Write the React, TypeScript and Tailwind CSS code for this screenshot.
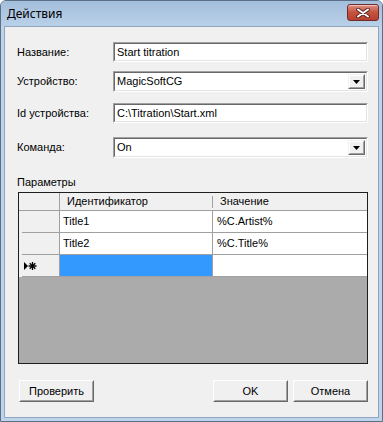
import React from "react";

const Sunken: React.FC<{ className?: string; children?: React.ReactNode }> = ({ className = "", children }) => (
  <div className={"border border-t-[#a0a0a0] border-l-[#a0a0a0] border-b-white border-r-white " + className}>
    <div className="h-full border border-t-[#696969] border-l-[#696969] border-b-[#e3e3e3] border-r-[#e3e3e3] bg-white flex items-center">
      {children}
    </div>
  </div>
);

const Arrow = () => (
  <svg width="7" height="4" viewBox="0 0 7 4">
    <polygon points="0,0 7,0 3.5,4" fill="#000" />
  </svg>
);

const TextBox: React.FC<{ value: string; className?: string }> = ({ value, className = "" }) => (
  <Sunken className={"h-[20px] " + className}>
    <span className="pl-[2px] text-[11px] leading-[13px] text-black whitespace-nowrap">{value}</span>
  </Sunken>
);

const Combo: React.FC<{ value: string; className?: string }> = ({ value, className = "" }) => (
  <Sunken className={"h-[21px] " + className}>
    <span className="pl-[2px] flex-1 text-[11px] leading-[13px] text-black whitespace-nowrap">{value}</span>
    <div className="mr-px h-[15px] w-[17px] border border-t-[#f0f0f0] border-l-[#f0f0f0] border-b-[#696969] border-r-[#696969]">
      <div className="h-full w-full border border-t-white border-l-white border-b-[#a0a0a0] border-r-[#a0a0a0] bg-[#f0f0f0] flex items-center justify-center">
        <Arrow />
      </div>
    </div>
  </Sunken>
);

const Btn: React.FC<{ label: string; className?: string }> = ({ label, className = "" }) => (
  <div className={"h-[22px] w-[75px] border border-t-white border-l-white border-b-[#696969] border-r-[#696969] " + className}>
    <div className="h-full w-full border border-t-[#f0f0f0] border-l-[#f0f0f0] border-b-[#a0a0a0] border-r-[#a0a0a0] bg-[#f0f0f0] flex items-center justify-center text-[11px] leading-[13px] text-black">
      {label}
    </div>
  </div>
);

const RowHead: React.FC<{ children?: React.ReactNode }> = ({ children }) => (
  <div className="h-[22px] bg-[#f0f0f0] border-r border-r-[#a0a0a0] flex flex-col">
    <div className="flex-1 flex items-center pl-[5px]">{children}</div>
    <div className="ml-[3px] h-px bg-[#a0a0a0]" />
  </div>
);

const Cell: React.FC<{ children?: React.ReactNode; className?: string; pad?: string }> = ({ children, className = "", pad = "pl-[3px]" }) => (
  <div className={"h-[22px] border-b border-b-[#a0a0a0] flex items-center text-[11px] leading-[13px] text-black whitespace-nowrap " + pad + " " + className}>
    {children}
  </div>
);

export default function App() {
  return (
    <div className="w-[383px] h-[422px] flex flex-col rounded-t-[6px] border border-[#5d6f86] bg-[#bfd4eb] font-['Liberation_Sans',Arial,sans-serif] overflow-hidden">
      {/* title bar */}
      <div className="h-[25px] flex items-center justify-between pl-[6px] pr-[3px] bg-gradient-to-b from-[#a3bedc] to-[#bad0e8]">
        <span className="font-['Noto_Sans',sans-serif] text-[12px] leading-[14px] text-black">Действия</span>
        <div className="mb-[2px] h-[17px] w-[32px] rounded-[3px] border border-[#6f2a2a] bg-gradient-to-b from-[#dc8e82] via-[#c5523f] to-[#b8402f] flex items-center justify-center shadow-[inset_0_1px_0_rgba(255,255,255,0.5)]">
          <svg width="14" height="10" viewBox="0 0 14 10">
            <path d="M2 1.5 L12 8.5 M12 1.5 L2 8.5" stroke="#4a1f1f" strokeWidth="3.6" strokeLinecap="round" />
            <path d="M2 1.5 L12 8.5 M12 1.5 L2 8.5" stroke="#ffffff" strokeWidth="2" strokeLinecap="round" />
          </svg>
        </div>
      </div>
      {/* client */}
      <div className="flex-1 mx-[3px] mb-[3px] border border-[#8fa6c1] bg-[#f0f0f0] flex flex-col pl-[12px] pr-[10px] pt-[15px] text-[11px] leading-[13px] text-black">
        <div className="flex items-center">
          <span className="w-[96px]">Название:</span>
          <TextBox value="Start titration" className="flex-1" />
        </div>
        <div className="flex items-center mt-[9px]">
          <span className="w-[96px]">Устройство:</span>
          <Combo value="MagicSoftCG" className="flex-1" />
        </div>
        <div className="flex items-center mt-[11px]">
          <span className="w-[96px]">Id устройства:</span>
          <TextBox value="C:\Titration\Start.xml" className="flex-1" />
        </div>
        <div className="flex items-center mt-[14px]">
          <span className="w-[96px]">Команда:</span>
          <Combo value="On" className="flex-1" />
        </div>
        <div className="mt-[18px]">Параметры</div>
        {/* grid */}
        <div className="mt-[3px] ml-px h-[172px] border border-[#1e1e1e] bg-[#ababab] flex flex-col">
          <div className="grid grid-cols-[41px_153px_1fr]">
            {/* header */}
            <div className="h-[18px] bg-[#f0f0f0] border-r border-r-[#a0a0a0] border-b border-b-[#a0a0a0]" />
            <div className="h-[18px] bg-[#f0f0f0] border-b border-b-[#a0a0a0] flex items-center">
              <span className="flex-1 pl-[7px]">Идентификатор</span>
              <div className="w-px h-[12px] bg-[#a0a0a0]" />
            </div>
            <div className="h-[18px] bg-[#f0f0f0] border-b border-b-[#a0a0a0] flex items-center pl-[7px]">Значение</div>
            {/* row 1 */}
            <RowHead />
            <Cell className="bg-white border-r border-r-[#a0a0a0]">Title1</Cell>
            <Cell className="bg-white" pad="pl-[4px]">%C.Artist%</Cell>
            {/* row 2 */}
            <RowHead />
            <Cell className="bg-white border-r border-r-[#a0a0a0]">Title2</Cell>
            <Cell className="bg-white" pad="pl-[4px]">%C.Title%</Cell>
            {/* new row */}
            <RowHead>
              <svg width="13" height="8" viewBox="0 0 13 8">
                <polygon points="0,0 4,4 0,8" fill="#000" />
                <g stroke="#000" strokeWidth="1.3">
                  <line x1="8.5" y1="0" x2="8.5" y2="8" />
                  <line x1="4.5" y1="4" x2="12.5" y2="4" />
                  <line x1="5.7" y1="1.2" x2="11.3" y2="6.8" />
                  <line x1="11.3" y1="1.2" x2="5.7" y2="6.8" />
                </g>
              </svg>
            </RowHead>
            <Cell className="bg-[#3399ff] border-r border-r-[#a0a0a0]" />
            <Cell className="bg-white" />
          </div>
        </div>
        {/* buttons */}
        <div className="mt-[16px] flex items-center pl-[2px]">
          <Btn label="Проверить" />
          <div className="flex-1" />
          <Btn label="OK" />
          <Btn label="Отмена" className="ml-[5px]" />
        </div>
      </div>
    </div>
  );
}
